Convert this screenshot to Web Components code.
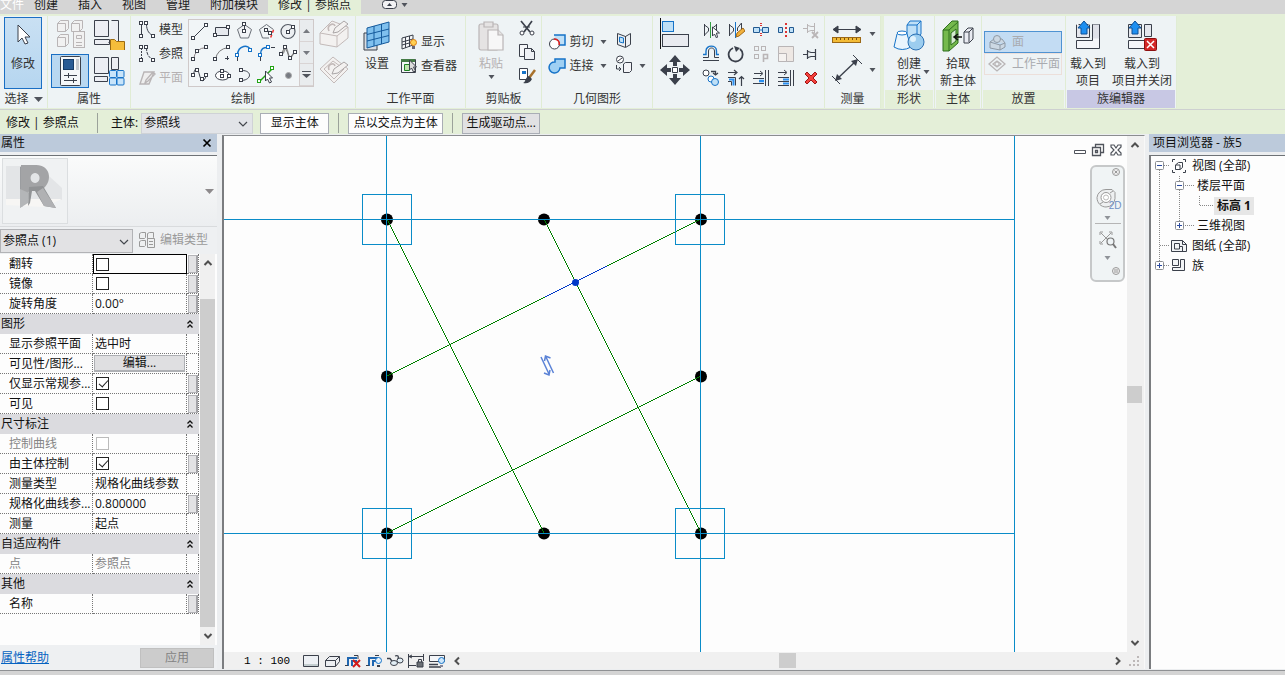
<!DOCTYPE html>
<html lang="zh-CN">
<head>
<meta charset="utf-8">
<title>族编辑器</title>
<style>
html,body{height:100%;margin:0}
body{display:flex;flex-direction:column;overflow:hidden;background:#eceef0;color:#1c1c1c;
 font:12px/16px "Open Sans","Noto Sans CJK SC",sans-serif}
main{flex:1;display:flex;min-height:0}
rv-canvas{flex:1;min-width:0}
footer{height:4px;background:#d4d4d4;border-top:1px solid #8f9194;flex:none}
</style>
</head>
<body>
<rv-tabs></rv-tabs>
<rv-ribbon></rv-ribbon>
<rv-options></rv-options>
<main>
<rv-properties></rv-properties>
<rv-canvas></rv-canvas>
<rv-browser></rv-browser>
</main>
<footer></footer>
<script>
const K='#3b404b', G='#b9b5b6', B='#1673c8', L='#bfe0f7';
const node=(x,y,c=K)=>`<rect x="${x-.5}" y="${y-.5}" width="3" height="3" fill="#fff" stroke="${c}"/>`;
const ICONS={
cursor:[16,24,`<path d="M3 2v17l4-4 3 6 3-1-3-6h5z" fill="#fff" stroke="${K}"/>`],
typeprops:[32,32,`<g fill="#f1f1f1" stroke="${G}"><path d="M3.500 5.500l3-3h8v8l-3 3h-8zM3.500 5.500h8v8M17.500 5.500l3-3h8v8l-3 3h-8zM17.500 5.500h8v8M3.500 19.500l3-3h8v9l-3 3h-8zM3.500 19.500h8v9"/><rect x="19.500" y="13.500" width="11" height="16"/><path d="M22.500 17.500h5v3h-5zM22 24.500h6M22 27.500h6"/></g>`],
folder:[32,32,`<g fill="#eceef3" stroke="${K}"><path d="M1.500 2.500h14v16h-14zM18.500 2.500h7v22h-10M1.500 21.500h15v5h-15z"/></g><path d="M17.500 21.500h4l2 2h8v9h-14z" fill="#f5bd3b" stroke="#9b6a12"/>`],
props:[32,32,`<rect x="6.500" y="1.500" width="20" height="29" rx="1" fill="#f5f7f9" stroke="${K}"/><rect x="9.500" y="4.500" width="10" height="10" fill="#285a94" stroke="#163c68"/><path d="M22 4h3v11h-3z" fill="#c4c8ce"/><path d="M10 20.500h13M10 25.500h13M14.500 18v5M19.500 23v5" stroke="${K}"/>`],
cats:[32,32,`<g fill="#eceef3" stroke="${K}"><path d="M1.500 2.500h14v16h-14zM18.500 2.500h7v12h-7zM1.500 21.500h13v5h-13z"/></g><g fill="#c8e4fa" stroke="${B}"><rect x="16.500" y="15.500" width="7" height="7" rx="1"/><rect x="24" y="15.500" width="7" height="7" rx="1"/><rect x="16.500" y="23" width="7" height="7" rx="1"/><rect x="24" y="23" width="7" height="7" rx="1"/></g>`],
model:[18,18,`<path d="M3.500 3v12M8.500 3c0 7 3 10 7 12" fill="none" stroke="${K}"/>${node(2,1)}${node(2,14)}${node(7,1)}${node(14,14)}`],
ref:[18,18,`<path d="M3.500 3v12" stroke="${K}" stroke-dasharray="2 1"/><path d="M8.500 3c0 7 3 10 7 12" fill="none" stroke="${K}" stroke-dasharray="3 1"/>${node(2,1)}${node(2,14)}${node(7,1)}${node(14,14)}`],
plane:[18,18,`<path d="M6 3h10l-5 12H2zM7 14l1-3 7-8 2 2-7 7z" fill="#eee" stroke="${G}" stroke-width="1.400"/>`],
line:[18,18,`<path d="M2 16L16 2" stroke="${K}"/>${node(1,15)}${node(14,2)}`],
rect:[18,18,`<path d="M2.500 5.500h13v8h-13z" fill="#e6e9ee" stroke="${K}"/>${node(1,12)}${node(14,4)}`],
poly:[18,18,`<path d="M9.500 2.500l7 5-3 8.500h-8l-3-8.500z" fill="#f0f2f5" stroke="#6b7078"/><path d="M9.500 2v7" stroke="${K}"/>${node(8,1)}${node(8,8)}`],
poly2:[18,18,`<path d="M9.500 2.500l7 5M12 16H5.500l-3-8.500 7-5" fill="none" stroke="#6b7078"/><path d="M9 8l4 2" stroke="${K}"/><path d="M16.500 8l-3 8" stroke="#e33" stroke-width="1.500" stroke-dasharray="3 2"/>${node(8,7)}${node(12,10)}`],
circ:[18,18,`<circle cx="9" cy="9.500" r="7" fill="#eceff2" stroke="#555b65" stroke-width="1.200"/><path d="M9 9l5-4" stroke="${K}"/>${node(8,9)}${node(13,4)}`],
arc1:[18,18,`<path d="M2.500 15.500Q4 4 15.500 3.500" fill="none" stroke="#8a8184"/>${node(1,14)}${node(5,6)}${node(14,2)}`],
arc2:[18,18,`<path d="M2.500 15.500Q4 5 15.500 3.500" fill="none" stroke="#777"/><path d="M12 14.500h4M14.500 12v4" stroke="${K}"/>${node(1,14)}${node(14,2)}`],
arc3:[18,18,`<path d="M2.500 11C3 1 14 0 15.500 6" fill="none" stroke="${B}" stroke-width="1.500"/><path d="M2.500 13v4" stroke="${K}"/>${node(1,10,B)}${node(14,5,B)}`],
arc4:[18,18,`<path d="M3.500 10c0-5 3-7 8-6.500" fill="none" stroke="${B}" stroke-width="1.500"/><path d="M3.500 13v4M14 3.500h4" stroke="${K}"/>${node(2,10,B)}${node(10,2,B)}`],
spl:[18,18,`<path d="M2 10c4 0 3-6 5-6s2 10 4 10 2-5 5-5" fill="none" stroke="#999" stroke-width="1.500"/><path d="M2 10l4-7 5 11 5-6" fill="none" stroke="#777"/>${node(1,9)}${node(5,2)}${node(10,13)}${node(15,7)}`],
wave:[18,18,`<path d="M2.500 9C4-1 7 3 8.500 9s4 9 7 0" fill="none" stroke="${K}"/>${node(1,8)}${node(5,3)}${node(10,12)}${node(14,8)}`],
ell:[18,18,`<ellipse cx="9.500" cy="9.500" rx="7" ry="4.500" fill="#fff" stroke="${K}"/>${node(8,4)}${node(8,9)}${node(15,9)}`],
half:[18,18,`<path d="M7 4.500c10 0 10 9 0 10" fill="none" stroke="${K}"/>${node(5,3)}${node(5,13)}`],
pick:[18,18,`<path d="M2 16L16 2" stroke="#22a314" stroke-width="1.500"/>${node(1,14,'#22a314')}${node(14,1,'#22a314')}<path d="M8.500 5v10l2-2 2 4 2-1-2-4h3z" fill="#fff" stroke="${K}"/>`],
point:[18,18,`<circle cx="9.500" cy="9.500" r="3" fill="#777b82" stroke="#aaa"/>`],
face:[32,32,`<g fill="#f3f1f0" stroke="#c3bab9" stroke-linejoin="round"><path d="M2 15L14 3l16 6v11l-11 9-17-3z"/><path d="M2 15l17 3L30 9M19 18v11" fill="none"/><path d="M11 13c-3-6 5-9 6-5" fill="none" stroke-width="1.600"/><path d="M15 15l2-5 9-7 4 3-10 8z" stroke="#aaa5a6"/></g>`],
wplane:[32,32,`<g fill="#f3f1f0" stroke="#c3bab9" stroke-linejoin="round"><path d="M2 15L15 3l15 12-14 14z"/><path d="M6 15l9-8 11 8-10 10z" fill="none"/><path d="M11 16c-2-6 5-8 6-4" fill="none" stroke-width="1.600"/><path d="M14 20l2-5 10-7 4 3-10 8z" stroke="#aaa5a6"/></g>`],
grid:[32,32,`<path d="M3 13h13v17H3z" fill="#d8dde2" stroke="${K}"/><path d="M6 8l22-6v20L6 28z" fill="#7fc0ee" stroke="#155a9c"/><path d="M6 14.500l22-5.500M6 21l22-5.500M13 6v20M20.500 4v20" stroke="#155a9c"/>`],
showgrid:[18,18,`<path d="M2 5l11-3v10L2 16zM2 9l11-3M2 12l11-3M5.500 4v11M9.500 3v11" fill="#f4f6f8" stroke="${K}"/><circle cx="13.500" cy="9.500" r="3" fill="#ffd052" stroke="#dd7e12"/><path d="M12 13h3v3h-3z" fill="#667"/>`],
viewer:[18,18,`<path d="M1.500 2.500h14v13h-14z" fill="#f4f6f8" stroke="${K}"/><path d="M1 2h14v3H1z" fill="#447b45"/><path d="M4.500 7.500h5v6h-5z" fill="#bfe3ae" stroke="#1d8222"/><path d="M9.500 3v10l2-2 2 4 2-1-2-4h3z" fill="#ddd" stroke="${K}"/>`],
paste:[32,32,`<g fill="#e5e3e3" stroke="${G}" stroke-width="1.200"><rect x="4" y="4" width="19" height="26" rx="2"/><path d="M9 2h9v5H9z"/><path d="M13 10h10l5 5v15H13z" fill="#f7f7f7"/><path d="M23 10v5h5"/></g>`],
cut:[18,18,`<path d="M3 2l9 11M14 2L6 13" stroke="${K}" stroke-width="1.700"/><circle cx="4" cy="14" r="2" fill="#fff" stroke="${K}"/><circle cx="14" cy="14" r="2" fill="#fff" stroke="${K}"/><path d="M5 8h7" stroke="${K}"/>`],
copy:[18,18,`<path d="M1.500 1.500h8v12h-8z" fill="#f4f6f8" stroke="${K}"/><path d="M6.500 5.500h7l3 3v8h-10zM13.500 5.500v3h3" fill="#eef1f5" stroke="${K}"/>`],
brush:[18,18,`<path d="M1.500 1.500h8v11h-8z" fill="#fff" stroke="${K}"/><path d="M4 4h4v3H4z" fill="${B}"/><path d="M17 3l-6 8" stroke="#a8712c" stroke-width="2.500"/><path d="M11 9l3 3c-2 4-5 5-9 4 3-1 2-6 6-7z" fill="${K}"/>`],
cutgeo:[18,18,`<path d="M6 2h11v10H9" fill="${L}" stroke="${B}" stroke-width="1.500"/><circle cx="6.500" cy="11" r="5" fill="#fff" stroke="${K}"/><path d="M6 6c4 0 6 3 5 6" fill="none" stroke="#d22" stroke-width="1.600"/>`],
join:[18,18,`<path d="M7 2h10v9h-5a5.500 5.500 0 1 1-5-6z" fill="#9fd0f3" stroke="${B}" stroke-width="1.500"/>`],
window:[18,18,`<path d="M2.500 2.500l8 3 5-3v11l-5 3-8-3z" fill="#eceff2" stroke="${K}"/><path d="M10.500 5v11" stroke="${K}"/><path d="M4.500 6l4 1v5l-4-1z" fill="${L}" stroke="${B}"/>`],
splitg:[18,18,`<circle cx="5" cy="4.500" r="3.500" fill="#fff" stroke="${K}"/><path d="M3 6l4-3M1.500 10v4h4M4 12l2 2-2 2" fill="none" stroke="${K}"/><path d="M8.500 9l2-1.500h6v8l-2 2h-6z" fill="#f3f4f7" stroke="${K}"/>`],
align:[32,32,`<path d="M1.500 0v31" stroke="#111"/><rect x="3.500" y="3.500" width="11" height="10" fill="${L}" stroke="${B}"/><rect x="3.500" y="16.500" width="26" height="12" fill="#e9ebf0" stroke="${K}"/>`],
move:[32,32,`<g fill="${K}"><path d="M16 1l6 7h-4v4h-4V8h-4zM16 31l6-7h-4v-4h-4v4h-4zM1 16l7-6v4h4v4H8v4zM31 16l-7-6v4h-4v4h4v4z"/></g><path d="M13.500 13.500h5v5h-5z" fill="#fff" stroke="${K}"/>`],
mir1:[18,18,`<path d="M2.500 3v12M2.500 4l4 3v3l-4 4M14.500 3v12M14.500 4l-4 3v3l4 4" fill="none" stroke="${K}"/><path d="M8.500 1v16" stroke="#33a043"/><path d="M10.500 6v9l2-2 2 4 1-1-1-4h3z" fill="#fff" stroke="${K}"/>`],
mir2:[18,18,`<path d="M2.500 3v12M2.500 4l4 3v3l-4 4M14.500 2v8M14.500 2l-4 5v3" fill="none" stroke="${K}"/><path d="M8.500 1v16" stroke="${B}"/><path d="M9 16l1-4 6-5 2 3-6 5z" fill="#f1b13c" stroke="#a56a16"/>`],
spl1:[18,18,`<path d="M1.500 6.500h6v5h-6zM10.500 6.500h6v5h-6z" fill="${L}" stroke="#225a91"/><path d="M7 9h4" stroke="${B}"/><path d="M9 2v4M9 12v4" stroke="#d33" stroke-width="2" stroke-dasharray="1 1"/>`],
spl2:[18,18,`<path d="M1.500 6.500h4v5h-4zM12.500 6.500h4v5h-4z" fill="${L}" stroke="#225a91"/><path d="M9 2v14" stroke="#d33" stroke-width="2" stroke-dasharray="2 2"/>`],
unpin:[18,18,`<path d="M1 7.500h4M5.500 3v9M6 4.500l3 1h3.500V2v10V9.500H9l-3 1" fill="none" stroke="${G}"/><path d="M10 11l6 6M16 11l-6 6" stroke="${G}" stroke-width="1.800"/>`],
offset:[18,18,`<path d="M1 15.500h16M1 12.500h5.500V6c0-4 6-4 6 0v6.500H17" fill="none" stroke="${K}"/><path d="M1 9.500h3V6c0-6.500 10.500-6.500 10.500 0v3.500H17" fill="none" stroke="${B}" stroke-width="1.400"/>`],
rotate:[18,18,`<path d="M6 3a7 7 0 1 0 7 1" fill="none" stroke="${K}" stroke-width="1.800"/><path d="M7 1l6 2-4 4z" fill="${K}"/>`],
array:[18,18,`<g fill="none" stroke="${G}"><rect x="2.500" y="1.500" width="4" height="4"/><rect x="9.500" y="1.500" width="4" height="4"/><rect x="2.500" y="9.500" width="4" height="4"/><path d="M11.500 17V9.500h4v4h-4" stroke-width="1.600"/></g>`],
scale:[18,18,`<path d="M1.500 1.500h15v15h-15z" fill="#eee8e4" stroke="${G}"/><path d="M1.500 8.500h8v8h-8z" fill="#f5f2f0" stroke="${G}"/>`],
pin:[18,18,`<path d="M1 9.500h4M5.500 5v9M6 6.500l3 1h4.500M13.500 4v11M6 12.500l3-1h4.500" fill="none" stroke="${K}" stroke-width="1.200"/>`],
copy2:[18,18,`<circle cx="4" cy="4" r="3" fill="#fff" stroke="${K}"/><path d="M9 2.500h4.500V6M11 4l2.500 2L16 4" fill="none" stroke="${K}" stroke-width="1.300"/><circle cx="9" cy="10" r="3" fill="#fff" stroke="${B}"/><circle cx="13" cy="13" r="3.500" fill="${L}" stroke="${B}"/>`],
trim:[18,18,`<path d="M1 3.500h8M7 1l3 2.500L7 6M14.500 17V8M12 10l2.500-2.500L17 10" fill="none" stroke="${K}" stroke-width="1.200"/><path d="M1 8.500h7.500v8M1 12.500h3.500v4" fill="none" stroke="${K}"/><path d="M2 10.500h4.500v6" fill="none" stroke="#2a8ff0" stroke-width="2"/>`],
trim2:[18,18,`<path d="M2 4.500h8M8 2l3 2.500L8 7M13.500 1v16M16.500 1v16M1 9.500h11M1 14.500h11" fill="none" stroke="${K}"/><path d="M7 12h5" stroke="#2a8ff0" stroke-width="2.500"/>`],
trim3:[18,18,`<path d="M1 3.500h8M7 1l3 2.500L7 6M13.500 1v16M16.500 1v16M1 8.500h11M1 12.500h11M1 16.500h11" fill="none" stroke="${K}"/><path d="M6 10.500h6M6 14.500h6" stroke="#2a8ff0" stroke-width="2"/>`],
del:[18,18,`<path d="M3 5l2-2 4 4 4-4 2 2-4 4 4 4-2 2-4-4-4 4-2-2 4-4z" fill="#f4413c" stroke="#a01414"/>`],
ruler:[32,32,`<path d="M3 11.500h26M7 8l-5 3.500L7 15zM25 8l5 3.500-5 3.500z" fill="${K}" stroke="${K}"/><rect x="1.500" y="19.500" width="28" height="5" fill="#f3bb36" stroke="#9b6816"/><path d="M5.500 20v2M9.500 20v2M13.500 20v2M17.500 20v2M21.500 20v2M25.500 20v2" stroke="#7c5210"/>`],
dim:[32,32,`<path d="M5 26L26 6" stroke="${K}" stroke-width="1.400"/><path d="M4 27l2-7 5 5zM27 5l-2 7-5-5z" fill="${K}"/><path d="M1 22l8 8M22 1l9 9" stroke="${K}"/>`],
shape:[32,32,`<path d="M14 5l3-4h11v13l-4 5H14z" fill="${L}" stroke="${B}"/><path d="M14 5h10l4-4M24 5v13" fill="none" stroke="${B}"/><path d="M4 14q5-4 10 0l4 13q-9 5-17 0z" fill="#eaf5fd" stroke="${B}"/><ellipse cx="9" cy="13" rx="5" ry="2" fill="#fff" stroke="${B}"/><circle cx="23" cy="22" r="8" fill="#9ccdef" stroke="#2a6fb2"/><circle cx="20" cy="19" r="3" fill="#dff1fc"/>`],
host:[32,32,`<path d="M1 10L10 1h6v22l-9 8H1z" fill="#75b94d" stroke="#2f6f1f"/><path d="M7 10l9-8M7 10v21M1 10h6" fill="none" stroke="#2f6f1f"/><path d="M9 13l5-4v12l-5 4z" fill="#d5ead0" stroke="#2f6f1f"/><path d="M13 17h7M16 14l-4 3 4 3" fill="none" stroke="#111" stroke-width="1.500"/><path d="M22 12l4-4h5v11l-4 4h-5zM22 12h5v10M27 12l4-4" fill="#e9ebf2" stroke="${K}"/>`],
place1:[18,18,`<path d="M2 9l4-3h8l3 4v4l-5 3-10-2zM2 9l10 3 5-2M12 12v5" fill="#ccd8e3" stroke="#8f9aa6"/><circle cx="9" cy="6" r="3.500" fill="#ccd8e3" stroke="#8f9aa6"/>`],
place2:[18,18,`<path d="M1 9l8-7 8 7-8 7zM5 9l4-3 4 3-4 3z" fill="none" stroke="${G}" stroke-width="1.300"/><circle cx="9" cy="9" r="2" fill="none" stroke="${G}"/>`],
load:[32,32,`<path d="M4.500 4.500h13v13h-13zM20.500 4.500h7v16h-7z" fill="#e5e7ed" stroke="${K}"/><path d="M4.500 20.500h16v-3h7v11h-23z" fill="#f6f7fa" stroke="${K}"/><path d="M21 4.500v14h6v-14z" fill="#dfe1e8"/><path d="M4.500 4.500h13" stroke="#fff" stroke-dasharray="2 2"/><path d="M12 1l6 7h-3v6H9V8H6z" fill="#1e8ff0" stroke="#0c4f96"/>`],
loadx:[32,32,`<path d="M2.500 4.500h13v13h-13zM18.500 4.500h7v12h-7z" fill="#e5e7ed" stroke="${K}"/><path d="M2.500 20.500h17v8h-17z" fill="#f6f7fa" stroke="${K}"/><path d="M9 1l6 7h-3v6H6V8H3z" fill="#1e8ff0" stroke="#0c4f96"/><rect x="18.500" y="18.500" width="12" height="12" rx="1" fill="#d42727" stroke="#8c1010"/><path d="M21 21l7 7M28 21l-7 7" stroke="#fff" stroke-width="1.500"/>`],
caret:[9,6,`<path d="M1.500 1h6l-3 4z" fill="#50545c"/>`],
caretup:[9,6,`<path d="M1 5h7L4.500 1z" fill="#777a80"/>`],
caretdn:[9,6,`<path d="M1 1h7L4.500 5z" fill="#777a80"/>`],
caretl:[9,6,`<path d="M0 1h9L4.500 6z" fill="#50545c"/>`],
caretg:[9,6,`<path d="M0 1h9L4.500 6z" fill="#8d8a8c"/>`],
more:[9,9,`<path d="M0 1.500h9" stroke="#50545c"/><path d="M0 4h9L4.500 8z" fill="#50545c"/>`],
pill:[16,10,`<rect x=".5" y=".5" width="14" height="8" rx="3" fill="#f2f2f4" stroke="${K}"/><path d="M5 6h5L7.500 3z" fill="${K}"/>`],
chev:[12,8,`<path d="M2 2l4 4 4-4" fill="none" stroke="#44484e" stroke-width="1.200"/>`],
up:[12,12,`<path d="M2.500 8L6 4.500 9.500 8" fill="none" stroke="#505050" stroke-width="2"/>`],
down:[12,12,`<path d="M2.500 4L6 7.500 9.500 4" fill="none" stroke="#505050" stroke-width="2"/>`],
left:[12,12,`<path d="M8 2.500L4.500 6 8 9.500" fill="none" stroke="#505050" stroke-width="2"/>`],
right:[12,12,`<path d="M4 2.500L7.500 6 4 9.500" fill="none" stroke="#505050" stroke-width="2"/>`],
x:[10,10,`<path d="M1.500 1.500l7 7M8.500 1.500l-7 7" stroke="#000" stroke-width="1.700"/>`],
dbl:[8,10,`<path d="M1.500 4.500L4 2l2.500 2.500M1.500 8.500L4 6l2.500 2.500" fill="none" stroke="#111" stroke-width="1.300"/>`],
etype:[18,18,`<g fill="#eef0f1" stroke="#9a9a9a"><path d="M1.500 2.500l2-1h4v5l-1 1h-5zM9.500 2.500l2-1h4v5l-1 1h-5zM1.500 10.500l2-1h4v5l-1 1h-5z"/><path d="M9.500 7.500h7v9h-7zM11 10.500h4M11 13.500h4"/></g>`],
rlogo:[64,64,`<path d="M3 7h32l24 22v12H3z" fill="#e3e5e7"/><path d="M3 40h56l-18 8-38-2z" fill="#f7f6f4"/><path d="M17 8l4-2v37l-4 6z" fill="#9b9da0"/><path fill-rule="evenodd" d="M18 6h14c15-1 18 15 9 23H27l-4 12-4 7h-1zM32 14a4.500 5 0 1 0 .1 0z" fill="#a3a4a6"/><path d="M17 30l9 4-1 10-8 5z" fill="#b4b6b8"/><path d="M26 28l14-1 13 22-12-2-9-15h-3l-2 12-2 3z" fill="#919395"/><path d="M40 29l13 20-12-2-7-14z" fill="#b0b1b3"/>`],
vscale:[18,16,`<path d="M.5 2.500h15v11H.5z" fill="#edf0f4" stroke="${K}"/><path d="M1 12h14" stroke="#9aa"/>`],
vcube:[18,16,`<path d="M1.500 7.500l4-4h10v5l-4 5h-10zM1.500 7.500h10v6M11.500 7.500l4-4" fill="#eceef1" stroke="${K}"/>`],
vcrop:[18,16,`<path d="M3 13V5h9M7 13V8h5" fill="none" stroke="#1f66b0" stroke-width="2"/><path d="M0 12.500h3M9 2.500h4V6" stroke="${K}" fill="none"/><path d="M8 7l7 7M15 7l-7 7" stroke="#d11a1a" stroke-width="2"/>`],
vcrop2:[18,16,`<path d="M3 13V5h9M7 13V8h4" fill="none" stroke="#1f66b0" stroke-width="2"/><path d="M0 12.500h3" stroke="${K}"/><circle cx="12.500" cy="7.500" r="3" fill="#e7f3fd" stroke="${B}"/><path d="M11 12h3v2h-3z" fill="${K}"/><path d="M9 2.500h4" stroke="${K}"/>`],
glasses:[18,16,`<path d="M0 5.500h3l3 4M8 3c3-1 4 0 3 3" fill="none" stroke="${K}" stroke-width="1.300"/><ellipse cx="7" cy="10" rx="3.500" ry="2.500" fill="#e2eef5" stroke="${K}"/><ellipse cx="13" cy="7.500" rx="3" ry="2.500" fill="#e2eef5" stroke="${K}"/>`],
vlock:[18,16,`<path d="M.5 1v14M15.500 1v7M0 3.500h16M4 2L1 3.500 4 5M1 12.500h7" fill="none" stroke="${K}"/><path d="M9 9h6v5H9z" fill="#6b6f75" stroke="${K}"/><path d="M10.500 9V6.500h3V9" fill="none" stroke="${K}"/>`],
vreveal:[18,16,`<path d="M.5 2.500h15v6H.5z" fill="#f4f6f9" stroke="${K}"/><path d="M0 11.500h9M0 14h12" stroke="${K}" stroke-width="1.300"/><circle cx="12.500" cy="7.500" r="3" fill="#cfe7fa" stroke="${B}"/><path d="M11 12h3v2h-3z" fill="#889"/>`],
grip:[14,12,`<path d="M9 1h2v2H9zM9 5h2v2H9zM9 9h2v2H9zM5 5h2v2H5zM5 9h2v2H5zM1 9h2v2H1z" fill="#bdb8b8"/>`],
min:[14,14,`<path d="M1.500 7.500h11v3h-11z" fill="#fff" stroke="#50545c"/>`],
rest:[14,14,`<path d="M4.500 4V1.500h8v8H10" fill="#fff" stroke="#50545c" stroke-width="1.300"/><path d="M1.500 4.500h8v8h-8zM4.500 7.500h2v2h-2z" fill="#fff" stroke="#50545c" stroke-width="1.300"/>`],
cls:[14,14,`<path d="M2 2h3l2 3 2-3h3v2L9 7l3 3v2H9L7 9l-2 3H2v-2l3-3-3-3z" fill="#fff" stroke="#50545c" stroke-width="1.200"/>`],
navx:[10,10,`<circle cx="5" cy="5" r="3.500" fill="#eee" stroke="#999"/><path d="M3.500 3.500l3 3M6.500 3.500l-3 3" stroke="#999"/>`],
navm:[10,10,`<circle cx="5" cy="5" r="3.500" fill="#eee" stroke="#999"/><path d="M3 4h4M3 6h4" stroke="#999"/>`],
wheel:[28,22,`<path d="M3 10.500a9 9 0 0 1 9-8h6l3 3v6a9 9 0 0 1-9 8.500c-5 0-9-4-9-9.500z" fill="#eef0f1" stroke="#999"/><circle cx="12" cy="10.500" r="5" fill="#fff" stroke="#999"/><circle cx="12" cy="10.500" r="2.500" fill="none" stroke="#bbb"/><path d="M6 17l3-2M16 6l3-2" stroke="#999"/>`],
zoom:[18,18,`<path d="M2 2l10 10M12 2L2 12M1 4V1h3M10 1h3v3M1 10v3h3" stroke="#999" fill="none"/><circle cx="11.500" cy="10.500" r="3.500" fill="#eef3f5" stroke="#777" stroke-width="1.200"/><path d="M14 13l3 4" stroke="#777" stroke-width="2"/>`],
tview:[16,16,`<path d="M4 1.500H1.500V4M12 1.500h2.500V4M4 14.500H1.500V12M12 14.500h2.500V12" fill="none" stroke="${K}"/><path d="M4.500 7l3-2.500h4v5L9 11.500H4.500zM4.500 7H9v4.500" fill="#fff" stroke="${K}"/>`],
tsheet:[16,16,`<path d="M.5 2.500h11l4 4v7H.5z" fill="#f2f4f6" stroke="${K}"/><path d="M11.500 2.500v4h4M3.500 11V5.500h5V11zM8 8.500h3.500V13" fill="none" stroke="${K}"/>`],
tfam:[16,16,`<path d="M1.500 1.500h6v6h-6zM9.500 1.500h4v11h-12v-3h8z" fill="#f2f4f6" stroke="${K}"/>`]
};
class Base extends HTMLElement{
 connectedCallback(){ if(this.shadowRoot) return;
  this.attachShadow({mode:'open'}).innerHTML='<style>:host,*{box-sizing:border-box}button,select,input{font:inherit;color:inherit;margin:0;padding:0;border:0;background:none}button{white-space:nowrap}'+this.css()+'</style>'+this.html(); }
 css(){return ''} html(){return '<slot></slot>'}
}
const ic=n=>`<rv-icon name="${n}"></rv-icon>`;
customElements.define('rv-icon',class extends Base{
 css(){return ':host{display:inline-flex;flex:none}svg{display:block}'}
 html(){const [w,h,s]=ICONS[this.getAttribute('name')];return `<svg width="${w}" height="${h}" viewBox="0 0 ${w} ${h}" aria-hidden="true">${s}</svg>`}
});
customElements.define('rv-tabs',class extends Base{
 css(){return `:host{display:flex;flex:none;height:14px;background:#d5d5d5}
 button{padding:0 10px 4px;height:14px;line-height:10px}
 .file{padding:0 0 4px;color:#fff}.on{background:#e4efd8}
 .min{display:flex;align-items:center;gap:2px;margin-left:11px}`}
 html(){return `<button class="file">文件</button>`+['创建','插入','视图','管理','附加模块'].map(t=>`<button>${t}</button>`).join('')+`<button class="on">修改 | 参照点</button><button class="min" aria-label="最小化功能区">${ic('pill')}${ic('caret')}</button>`}
});
customElements.define('rv-panel',class extends Base{
 css(){return `:host{display:flex;flex-direction:column;flex:none;background:#eef3f5;border-right:1px solid #e0ecd4;height:92px}
 .body{height:74px;display:flex;align-items:flex-start}
 .label{height:18px;display:flex;align-items:center;justify-content:center;gap:5px;margin:0 1px;color:#333}
 :host([context]) .label{background:#e4efd8}
 :host([context=family]) .label{background:#c8c8e4}`}
 html(){return `<div class="body"><slot></slot></div><div class="label">${this.getAttribute('label')}${this.hasAttribute('menu')?ic('caretl'):''}</div>`}
});
customElements.define('rv-tool',class extends Base{
 css(){return `:host{display:block;flex:none}
 button{display:flex;flex-direction:column;align-items:center;width:100%;padding-top:4px;line-height:17px;color:#333}
 .t{display:flex;margin-top:3px;align-items:center;text-align:center}
 .t.c{padding-left:10px;gap:1px}
 .below{margin-top:2px;line-height:0}
 :host([disabled]) button{color:#b5b1b2}`}
 html(){const a=n=>this.getAttribute(n);return `<button${this.hasAttribute('disabled')?' disabled':''}>${ic(a('icon'))}<span class="t${this.hasAttribute('side')?' c':''}"><span>${a('text').replace('/','<br>')}</span>${this.hasAttribute('side')?ic('caret'):''}</span>${this.hasAttribute('below')?'<span class="below">'+ic('caret')+'</span>':''}</button>`}
});
customElements.define('rv-item',class extends Base{
 css(){return `:host{display:flex;height:24px;flex:none;color:#333}
 button{display:flex;align-items:center;gap:3px}
 :host([disabled]) button{color:#b5b1b2}`}
 html(){return `<button${this.hasAttribute('disabled')?' disabled':''}>${ic(this.getAttribute('icon'))}<span><slot></slot></span></button>`}
});
customElements.define('rv-ribbon',class extends Base{
 css(){return `:host{display:flex;flex:none;background:#e4efd8;padding:2px 0 1px;border-bottom:1px solid #cdd0d0;overflow:hidden}
 .big{width:38px;height:72px;margin:1px 4px;background:linear-gradient(#c9e0f3,#b6d6f0);border:1px solid #1a6fc4;display:flex;flex-direction:column;align-items:center;padding-top:5px}
 .big span{margin-top:9px;color:#333}
 .tiles{display:grid;grid-template-columns:38px 38px;grid-auto-rows:34px;gap:3px 1px;padding:1px 0 0 3px}
 .tiles button{display:grid;place-items:center}.tiles .on{background:#b9d8f1;border:1px solid #1a6fc4}
 .col{display:flex;flex-direction:column;padding-top:2px}
 .col.top{padding-top:0}.col.mid{padding-top:14px}
 .col.two{gap:4px}
 .col>button{height:24px;display:grid;place-items:center}
 .col.two>button{height:32px;display:flex;align-items:center;gap:5px}
 .gal{display:flex;margin:3px 4px 0 5px;border:1px solid #cfc9c9;height:68px;background:#f1f5f7}
 .cells{display:grid;grid-template-columns:repeat(5,22px);grid-auto-rows:22px}
 .cells button,.mods button{display:grid;place-items:center}
 .sb{width:14px;display:grid;grid-template-rows:repeat(3,22px);background:#e9ecee;border-left:1px solid #d2cccc}
 .sb button{display:grid;place-items:center;border-bottom:1px solid #d9d4d4}
 .mods{display:grid;grid-template-columns:repeat(5,25px);grid-auto-rows:24px;padding-top:2px}
 .geo{display:grid;grid-template-columns:46px 18px 24px 12px;grid-auto-rows:24px;align-items:center;justify-items:center;padding:14px 0 0 6px}
 .place{display:flex;flex-direction:column;padding:15px 2px 0;flex:1}
 .place button{height:22px;width:78px;display:flex;align-items:center;gap:6px;padding-left:3px;color:#a9abb0;border:1px solid #ecdfda}
 .place .on{background:#c3dcf3;border-color:#4f93d2}`}
 html(){const b=(a)=>a.map(n=>`<button aria-label="${n}">${ic(n)}</button>`).join('');
 return `
 <rv-panel label="选择" menu style="width:48px"><button class="big">${ic('cursor')}<span>修改</span></button></rv-panel>
 <rv-panel label="属性" style="width:83px"><div class="tiles"><button aria-label="类型属性">${ic('typeprops')}</button><button aria-label="族类别">${ic('folder')}</button><button class="on" aria-label="属性">${ic('props')}</button><button aria-label="族类型">${ic('cats')}</button></div></rv-panel>
 <rv-panel label="绘制" style="width:225px"><div class="col" style="padding-left:7px"><rv-item icon="model">模型</rv-item><rv-item icon="ref">参照</rv-item><rv-item icon="plane" disabled>平面</rv-item></div>
 <div class="gal"><div class="cells">${b(['line','rect','poly','poly2','circ','arc1','arc2','arc3','arc4','spl','wave','ell','half','pick','point'])}</div><div class="sb">${b(['caretup','caretdn','more'])}</div></div>
 <div class="col two">${b(['face','wplane'])}</div></rv-panel>
 <rv-panel label="工作平面" style="width:110px"><rv-tool icon="grid" text="设置" style="margin:0 7px 0 5px"></rv-tool><div class="col mid"><rv-item icon="showgrid">显示</rv-item><rv-item icon="viewer">查看器</rv-item></div></rv-panel>
 <rv-panel label="剪贴板" style="width:76px"><rv-tool icon="paste" text="粘贴" disabled below style="margin:0 11px 0 9px"></rv-tool><div class="col top">${b(['cut','copy','brush'])}</div></rv-panel>
 <rv-panel label="几何图形" style="width:111px"><div class="geo"><rv-item icon="cutgeo">剪切</rv-item>${ic('caret')}<button aria-label="洞口">${ic('window')}</button><i></i><rv-item icon="join">连接</rv-item>${ic('caret')}<button aria-label="拆分">${ic('splitg')}</button>${ic('caret')}</div></rv-panel>
 <rv-panel label="修改" style="width:172px"><div class="col two" style="margin:0 7px 0 6px">${b(['align','move'])}</div><div class="mods">${b(['mir1','mir2','spl1','spl2','unpin','offset','rotate','array','scale','pin','copy2','trim','trim2','trim3','del'])}</div></rv-panel>
 <rv-panel label="测量" style="width:56px"><div class="col two" style="margin-left:6px"><button aria-label="测量">${ic('ruler')}${ic('caret')}</button><button aria-label="标注">${ic('dim')}${ic('caret')}</button></div></rv-panel>
 <rv-panel label="形状" context style="width:51px;margin-left:3px"><rv-tool icon="shape" text="创建/形状" side style="width:50px"></rv-tool></rv-panel>
 <rv-panel label="主体" context style="width:47px"><rv-tool icon="host" text="拾取/新主体" style="width:46px"></rv-tool></rv-panel>
 <rv-panel label="放置" context style="width:84px"><div class="place"><button class="on">${ic('place1')}面</button><button>${ic('place2')}工作平面</button></div></rv-panel>
 <rv-panel label="族编辑器" context="family" style="width:111px"><rv-tool icon="load" text="载入到/项目" style="width:44px"></rv-tool><rv-tool icon="loadx" text="载入到/项目并关闭" style="width:64px"></rv-tool></rv-panel>`}
});
customElements.define('rv-options',class extends Base{
 css(){return `:host{display:flex;flex:none;height:24px;background:#e4efd8;align-items:center;padding:2px 6px 0;color:#111}
 hr{width:1px;height:20px;border:0;background:#9ba29a;margin:0}
 .title{width:91px}label{margin:0 3px 0 13px}
 .sel{position:relative;display:flex}.sel rv-icon{position:absolute;right:4px;top:7px;pointer-events:none}
 select{appearance:none;width:112px;height:21px;background:#e2e4e8;border:1px solid #cfd2d6;padding-left:2px}
 button{height:21px;border:1px solid #a9adb5;background:#fdfdfd}
 .a{width:69px;margin:0 9px 0 7px}.b{width:95px;margin:0 9px}.c{width:78px;margin-left:9px;background:#e1e1e3}`}
 html(){return `<span class="title">修改 | 参照点</span><hr><label for="h">主体:</label><span class="sel"><select id="h"><option>参照线</option></select>${ic('chev')}</span>
 <button class="a">显示主体</button><hr><button class="b">点以交点为主体</button><hr><button class="c">生成驱动点...</button>`}
});
customElements.define('rv-scroll',class extends Base{
 css(){return `:host{display:flex;flex-direction:column;align-items:center;width:15px;background:#f0f0f0}
 .track{flex:1;align-self:stretch;display:flex;flex-direction:column}
 .thumb{background:#cdcdcd;flex:none;width:100%;height:var(--size,17px)}
 .pad{flex:var(--before,1)}.end{flex:var(--after,1)}button{height:18px;display:grid;place-items:center}
 :host([horizontal]){flex-direction:row;width:auto;height:15px}
 :host([horizontal]) .track{flex-direction:row}
 :host([horizontal]) .thumb{width:17px;height:100%}`}
 html(){const h=this.hasAttribute('horizontal');return `<button aria-label="后退">${ic(h?'left':'up')}</button><div class="track"><div class="pad"></div><div class="thumb"></div><div class="end"></div></div><button aria-label="前进">${ic(h?'right':'down')}</button>`}
});
const PROPS=[
 ['翻转','c','',1,'focus'],['镜像','c','',1],['旋转角度','i','0.00°',1],
 ['图形'],['显示参照平面','t','选中时'],['可见性/图形...','b','编辑...'],['仅显示常规参...','c','checked',1],['可见','c','',1],
 ['尺寸标注'],['控制曲线','c','disabled'],['由主体控制','c','checked',1],['测量类型','t','规格化曲线参数'],['规格化曲线参...','i','0.800000',1],['测量','t','起点'],
 ['自适应构件'],['点','t','参照点',0,'dim'],['其他'],['名称','i','',1]];
customElements.define('rv-properties',class extends Base{
 css(){return `:host{display:flex;flex-direction:column;width:217px;flex:none;background:#eef0f2;color:#111;overflow:hidden}
 header{height:18px;background:#bccadb;display:flex;justify-content:space-between;align-items:center;padding:0 5px 0 1px;flex:none}
 header button{display:flex}
 .type{height:72px;margin-top:3px;border-top:1px solid #6e7276;background:linear-gradient(#fafbfb,#eceef0);display:flex;align-items:center;justify-content:space-between;padding:0 3px 0 2px;flex:none;border-bottom:1px solid #d9dbdd}
 .thumb{width:66px;height:66px;border:1px solid #dbdee0;background:#f0f2f3}
 .pick{display:flex;height:25px;margin:2px 0 0;align-items:flex-start;flex:none}
 .sel{position:relative;display:flex}.sel rv-icon{position:absolute;right:3px;top:9px;pointer-events:none}
 select{appearance:none;width:133px;height:24px;background:#e2e2e4;border:1px solid #b2b3b6;padding-left:2px}
 .et{display:flex;align-items:center;gap:4px;height:22px;margin-left:5px;color:#9a9a9a}
 .list{flex:1;display:flex;min-height:0;background:#fdfdfd}
 .rows{flex:1;overflow:hidden}
 table{border-collapse:separate;border-spacing:0;table-layout:fixed;width:199px;line-height:18px}
 tr{height:20px}td,th{padding:0;height:20px;font-weight:400;text-align:left;border-bottom:1px dotted #777;border-right:1px dotted #777;white-space:nowrap;overflow:hidden}
 tbody th{padding-left:9px}
 th.g{padding-left:1px;background:#dbdbdf;border:0}
 th.g div{display:flex;justify-content:space-between;align-items:center;padding-right:5px}
 td{padding-left:2px}td.m{padding:0 0 0 1px}
 td.m button{display:block;width:10px;height:18px;background:#e2e2e4;border:1px solid #b4b4b8;border-right:2px solid #a2a2a6}
 td.e{padding:1px}td.e button{display:block;width:91px;height:17px;line-height:14px;background:#dfdfe1;border:1px solid #aeb0b4;border-bottom-width:2px}
 td.focus{border:1px solid #000;padding-left:1px}
 .dim th,.dim td{color:#858585}
 input[type=checkbox]{appearance:none;display:block;width:13px;height:13px;border:1px solid #222;background:#fff;margin-left:1px}
 input:checked::after{content:"";display:block;width:8px;height:4px;margin:2px 0 0 2px;border:solid #222;border-width:0 0 1px 1px;transform:rotate(-48deg)}
 input:disabled{border-color:#bbb}
 input[type=text]{width:90px;height:18px;display:block}
 footer{height:25px;display:flex;justify-content:space-between;align-items:center;padding:0 3px 0 1px;flex:none}
 a{color:#0563c1}footer button{width:74px;height:20px;background:#cccccc;border:1px solid #c0c0c0;color:#838383}
 rv-scroll{--size:328px;--before:1;--after:0;margin:0 2px 0 1px}`}
 html(){let r='';PROPS.forEach((p,i)=>{const [n,k,v,m,f]=p;
  if(!k){r+=`<tr><th class="g" colspan="3" scope="rowgroup"><div>${n}${ic('dbl')}</div></th></tr>`;return}
  const id='p'+i,dim=f==='dim'||v==='disabled';
  const val=k==='c'?`<input type="checkbox" id="${id}" ${v}>`:k==='i'?`<input type="text" id="${id}" value="${v}">`:k==='b'?`<button id="${id}">${v}</button>`:`<span>${v}</span>`;
  r+=`<tr${dim?' class="dim"':''}><th scope="row">${k==='t'?n:`<label for="${id}">${n}</label>`}</th><td class="${k==='b'?'e':''} ${f==='focus'?'focus':''}">${val}</td><td class="m">${m?'<button aria-label="关联"></button>':''}</td></tr>`});
 return `<header><span>属性</span><button aria-label="关闭">${ic('x')}</button></header>
 <div class="type"><div class="thumb">${ic('rlogo')}</div>${ic('caretg')}</div>
 <div class="pick"><span class="sel"><select aria-label="类别"><option>参照点 (1)</option></select>${ic('chev')}</span><button class="et" disabled>${ic('etype')}编辑类型</button></div>
 <div class="list"><div class="rows"><table><colgroup><col style="width:93px"><col style="width:94px"><col style="width:12px"></colgroup><tbody>${r}</tbody></table></div><rv-scroll></rv-scroll></div>
 <footer><a href="#help">属性帮助</a><button disabled>应用</button></footer>`}
});
customElements.define('rv-navbar',class extends Base{
 css(){return `:host{display:flex;flex-direction:column;align-items:center;width:35px;height:117px;border:2px solid #c6c8c9;border-radius:6px;background:#f0f4f5;padding:0 2px;overflow:hidden}
 .x{align-self:flex-end;line-height:0}
 .w{margin-top:10px;line-height:0;position:relative}
 .d{position:absolute;right:0;bottom:-2px;color:#6d8fc4;font:10px/10px "Liberation Sans",sans-serif}
 .z,.c{line-height:0}.c{margin-top:6px;opacity:.6}hr{width:26px;border:0;border-top:1px solid #b5b5b5;margin:2px 0 7px}
 .y{align-self:flex-end;margin-top:5px;line-height:0}`}
 html(){return `<button class="x" aria-label="关闭">${ic('navx')}</button><button class="w">${ic('wheel')}<span class="d">2D</span></button><span class="c">${ic('caret')}</span><hr><button class="z" aria-label="缩放">${ic('zoom')}</button><span class="c">${ic('caret')}</span><button class="y" aria-label="自定义">${ic('navm')}</button>`}
});
customElements.define('rv-canvas',class extends Base{
 css(){return `:host{display:flex;flex-direction:column;margin:1px 0 1px 5px;border-left:2px solid #7b7d80;border-top:1px solid #8b8d90;background:#f0f0f0;border-right:1px solid #f8f8f8}
 .top{flex:1;display:flex;min-height:0}
 .view{flex:1;position:relative;background:#fdfdfd;overflow:hidden}
 .view>svg{position:absolute;inset:0;width:100%;height:100%}
 .win{position:absolute;right:4px;top:7px;display:flex;gap:4px}
 .win button{display:flex}
 rv-navbar{position:absolute;right:2px;top:29px}
 .bar{height:17px;flex:none;display:flex;align-items:center;padding-right:2px}
 .scale{width:79px;padding-left:20px;white-space:pre;font:11px/16px "Liberation Mono",monospace;color:#000}
 .ics{display:flex;gap:3px}.ics button{display:flex}
 .bar rv-scroll{flex:1;margin:0 4px}
 .top rv-scroll{margin-right:2px}`}
 html(){const sq=[[362,194],[675,194],[362,508],[675,508]].map(([x,y])=>`<path d="M${x}.5 ${y}.5h49v50h-49z"/>`).join('');
 const dots=[[387,219],[544,219],[701,219],[387,376],[701,376],[387,533],[544,533],[701,533]].map(([x,y])=>`<circle cx="${x}" cy="${y+.5}" r="6"/>`).join('');
 return `<div class="top"><div class="view"><svg role="img" aria-label="参照平面"><g transform="translate(-224 -136)">${dots}
 <g shape-rendering="crispEdges" fill="none"><g stroke="#008000"><path d="M387 219L544 533M387 376L701 219M544 219L701 533M387 533L701 376"/></g><path d="M545 297L607 266" stroke="#0038c8"/>
 <g stroke="#0a8cc8"><path d="M386.500 0v4000M700.500 0v4000M1014.500 0v4000M200 219.500h815M200 533.500h815"/>${sq}</g></g>
 <circle cx="575.500" cy="282.500" r="3.500" fill="#0038c8"/>
 <path d="M541 357l8 17m-5-1l5 2 1-5M553.500 373l-8-17m-1 5l1-5 5 2" fill="none" stroke="#5a82d6" stroke-width="1.500"/></g></svg>
 <div class="win"><button aria-label="最小化">${ic('min')}</button><button aria-label="还原">${ic('rest')}</button><button aria-label="关闭">${ic('cls')}</button></div><rv-navbar></rv-navbar></div><rv-scroll></rv-scroll></div>
 <div class="bar"><span class="scale">1 : 100</span><div class="ics">${['vscale','vcube','vcrop','vcrop2','glasses','vlock','vreveal'].map(n=>`<button aria-label="${n}">${ic(n)}</button>`).join('')}</div><rv-scroll horizontal></rv-scroll>${ic('grip')}</div>`}
});
const dot='stroke="#888" stroke-dasharray="1 1" fill="none"';
const box=(x,plus)=>`<rect x="${x-4}.5" y="5.500" width="8" height="8" rx="1" fill="#fff" stroke="#8a8d92"/><path d="M${x-2} 9.500h5${plus?`M${x+.5} 7v5`:''}" stroke="#2a4aa0" fill="none"/>`;
customElements.define('rv-browser',class extends Base{
 css(){return `:host{display:flex;flex-direction:column;width:136px;flex:none;margin-left:4px;color:#111}
 header{height:18px;line-height:18px;background:#bccadb;padding-left:4px;flex:none}
 .tree{flex:1;margin:3px 0 1px;border-left:2px solid #7b7d80;border-top:1px solid #6e7276;background:#fdfdfd}
 ul{list-style:none;margin:0;padding:0}
 li{display:flex;align-items:center;height:20px}li svg{flex:none}
 rv-icon{margin-right:5px}.b{font-weight:700;background:#e6e6e6;padding:1px 3px}`}
 html(){const row=(w,s,i,t,c='')=>`<li><svg width="${w}" height="20">${s}</svg>${i?ic(i):''}<span class="${c}">${t}</span></li>`;
 return `<header>项目浏览器 - 族5</header><div class="tree"><ul>
 ${row(20,`<path d="M8.500 14v6M13 9.500h6" ${dot}/>`+box(8),'tview','视图 (全部)')}
 ${row(46,`<path d="M8.500 0v20M28.500 0v5M28.500 14v6M34 9.500h10" ${dot}/>`+box(28),'','楼层平面')}
 ${row(63,`<path d="M8.500 0v20M28.500 0v20M48.500 0v10M49 9.500h13" ${dot}/>`,'','标高 1','b')}
 ${row(46,`<path d="M8.500 0v20M28.500 0v5M34 9.500h10" ${dot}/>`+box(28,1),'','三维视图')}
 ${row(20,`<path d="M8.500 0v20M9 9.500h10" ${dot}/>`,'tsheet','图纸 (全部)')}
 ${row(20,`<path d="M8.500 0v5M13 9.500h6" ${dot}/>`+box(8,1),'tfam','族')}
 </ul></div>`}
});
</script>
</body>
</html>
